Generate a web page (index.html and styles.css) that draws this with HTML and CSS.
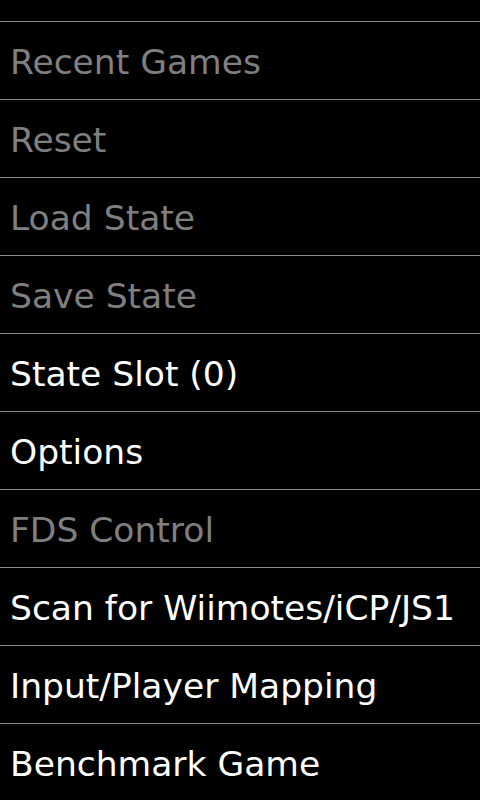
FILE: index.html
```html
<!DOCTYPE html>
<html lang="en">
<head>
  <meta charset="UTF-8" />
  <meta name="viewport" content="width=device-width, initial-scale=1.0"/>
  <title>Menu</title>
  <link rel="stylesheet" href="styles.css">
</head>
<body>

<!-- scrolled menu list, top item cut off -->
<ul class="menu">
  <li class="menu-item disabled">Recent Games</li>
  <li class="menu-item disabled">Reset</li>
  <li class="menu-item disabled">Load State</li>
  <li class="menu-item disabled">Save State</li>
  <li class="menu-item">State Slot (0)</li>
  <li class="menu-item">Options</li>
  <li class="menu-item disabled">FDS Control</li>
  <li class="menu-item">Scan for Wiimotes/iCP/JS1</li>
  <li class="menu-item">Input/Player Mapping</li>
  <li class="menu-item">Benchmark Game</li>
</ul>

</body>
</html>
```

FILE: styles.css
```css
body {
  margin: 0;
  padding: 0;
  background: #000;
  font-family: 'DejaVu Sans', sans-serif;
  overflow: hidden;
  height: 800px;
}

.menu {
  list-style: none;
  margin: 0;
  padding: 21px 0 0 0;
}

.menu-item {
  border-top: 1px solid #888;
  height: 73px;
  line-height: 73px;
  padding: 4px 0 0 10px;
  font-size: 34.5px;
  color: #fff;
  white-space: nowrap;
}

.menu-item.disabled {
  color: #7f7f7f;
}
```
